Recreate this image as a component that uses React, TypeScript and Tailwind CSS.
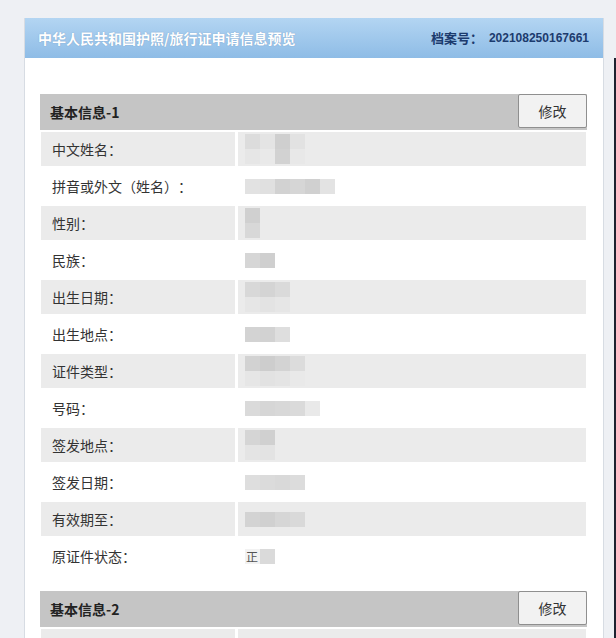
import React from 'react';

type Row = { label: string; mosaic: string[][]; mark?: string };

// blurred values, drawn as pixel blocks (each cell 15px)
const section1: Row[] = [
  { label: '中文姓名：', mosaic: [['#dcdcdc', '#e4e4e4', '#cfcfcf', '#e2e2e2'], ['#e6e6e6', '#e9e9e9', '#d2d2d2', '#e8e8e8']] },
  { label: '拼音或外文（姓名）：', mosaic: [['#e2e2e2', '#e0e0e0', '#d2d2d2', '#d6d6d6', '#d0d0d0', '#e3e3e3']] },
  { label: '性别：', mosaic: [['#d0d0d0'], ['#d8d8d8']] },
  { label: '民族：', mosaic: [['#d6d6d6', '#cfcfcf']] },
  { label: '出生日期：', mosaic: [['#d8d8d8', '#d4d4d4', '#dadada'], ['#e6e6e6', '#e3e3e3', '#e6e6e6']] },
  { label: '出生地点：', mosaic: [['#d3d3d3', '#d2d2d2', '#dedede']] },
  { label: '证件类型：', mosaic: [['#d2d2d2', '#cdcdcd', '#d3d3d3', '#dcdcdc'], ['#e6e6e6', '#e2e2e2', '#e4e4e4', '#e9e9e9']] },
  { label: '号码：', mosaic: [['#dadada', '#d6d6d6', '#d8d8d8', '#dadada', '#e9e9e9']] },
  { label: '签发地点：', mosaic: [['#d5d5d5', '#d0d0d0'], ['#e4e4e4', '#e3e3e3']] },
  { label: '签发日期：', mosaic: [['#dedede', '#dbdbdb', '#d9d9d9', '#dcdcdc']] },
  { label: '有效期至：', mosaic: [['#d3d3d3', '#d0d0d0', '#d6d6d6', '#d9d9d9']] },
  { label: '原证件状态：', mosaic: [['#f2f2f2', '#dadada']], mark: '正' },
];

const Mosaic = ({ cells, mark }: { cells: string[][]; mark?: string }) => (
  <div className="relative flex flex-col">
    {cells.map((line, i) => (
      <div key={i} className="flex">
        {line.map((c, j) => (
          <div key={j} className="w-[15px] h-[15px]" style={{ backgroundColor: c }} />
        ))}
      </div>
    ))}
    {mark && (
      <span className="absolute left-[1px] top-0 text-[12px] leading-[15px] text-[#555] font-['Noto_Sans_CJK_SC',serif]">
        {mark}
      </span>
    )}
  </div>
);

const SectionHeader = ({ title }: { title: string }) => (
  <div className="relative h-[36px] bg-[#c5c5c5] flex items-center pl-[10px]">
    <span className="text-[14px] font-bold text-[#222]">{title}</span>
    <button className="absolute right-0 top-0 w-[69px] h-[34px] bg-[#f2f2f2] border border-[#8f8f8f] rounded-[2px] text-[14px] text-[#333]">
      修改
    </button>
  </div>
);

const InfoRow = ({ row, shaded }: { row: Row; shaded: boolean }) => {
  const bg = shaded ? 'bg-[#ebebeb]' : 'bg-white';
  return (
    <div className="flex gap-[3px] h-[34px]">
      <div className={`w-[194px] ${bg} flex items-center pl-[11px] text-[14px] text-[#333] [text-spacing-trim:space-all]`}>
        {row.label}
      </div>
      <div className={`flex-1 ${bg} flex items-center pl-[7px]`}>
        <Mosaic cells={row.mosaic} mark={row.mark} />
      </div>
    </div>
  );
};

export default function App() {
  return (
    <div className="relative w-[616px] h-[638px] overflow-hidden bg-[#eef0f4] pt-[18px] font-['Noto_Sans_CJK_SC','Microsoft_YaHei',sans-serif]">
      <div className="ml-[24px] w-[580px] h-[640px] bg-white border-x border-[#d7dce3]">
        {/* header bar */}
        <div className="h-[40px] bg-gradient-to-b from-[#b3d5f2] to-[#8ebce6] flex items-center justify-between pl-[13px] pr-[14px]">
          <span className="text-[14px] font-bold text-white [text-shadow:0_0_1px_rgba(60,100,150,0.5)]">
            中华人民共和国护照/旅行证申请信息预览
          </span>
          <span className="flex items-center font-bold text-[#1c3b6e] [text-spacing-trim:space-all]">
            <span className="text-[13px]">档案号：</span>
            <span className="ml-[6px] text-[12px] font-['Liberation_Sans',Arial,sans-serif]">202108250167661</span>
          </span>
        </div>

        <div className="pt-[36px] pl-[15px] pr-[16px]">
          <SectionHeader title="基本信息-1" />
          <div className="flex flex-col gap-[3px] pt-[2px] px-[1px]">
            {section1.map((row, i) => (
              <InfoRow key={row.label} row={row} shaded={i % 2 === 0} />
            ))}
          </div>

          <div className="mt-[18px]">
            <SectionHeader title="基本信息-2" />
            <div className="flex gap-[3px] h-[34px] pt-[2px] px-[1px]">
              <div className="w-[194px] bg-[#ebebeb]" />
              <div className="flex-1 bg-[#ebebeb]" />
            </div>
          </div>
        </div>
      </div>
      {/* edge of a neighbouring window */}
      <div className="absolute right-0 top-[58px] w-[2px] h-[580px] bg-[#1d2230]" />
    </div>
  );
}
